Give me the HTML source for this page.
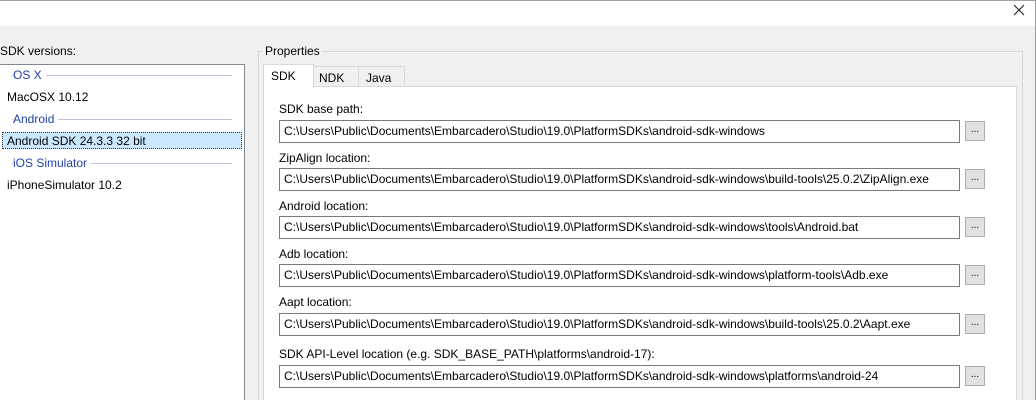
<!DOCTYPE html>
<html><head><style>
*{margin:0;padding:0;box-sizing:border-box}
html,body{width:1036px;height:400px;overflow:hidden}
body{background:#f0f0f0;font-family:"Liberation Sans",sans-serif;font-size:12px;color:#000;position:relative}
.a{position:absolute}
.lbl{position:absolute;left:279px;white-space:nowrap}
.fld{position:absolute;left:279px;width:681px;height:23px;background:#fff;border:1px solid #7a7a7a;padding:3px 0 0 4px;white-space:nowrap}
.btn{position:absolute;left:965px;width:20px;height:20px;background:#e1e1e1;border:1px solid #adadad;font-size:10px;text-align:center;line-height:16px}
.hdr{position:absolute;left:13px;color:#1f3fa8;white-space:nowrap;background:#fff;padding-right:4px}
.hl{position:absolute;left:12px;width:220px;border-top:1px solid #c0c4d8}
</style></head><body>
<div class="a" style="left:0;top:0;width:1036px;height:26px;background:#fff"></div>
<div class="a" style="left:0;top:0;width:1036px;height:400px;border:1px solid #a0a0a0;border-bottom:none;border-left:none"></div>
<svg class="a" style="left:1013px;top:4px" width="12" height="12"><path d="M1 1L11 11M11 1L1 11" stroke="#222" stroke-width="1.1"/></svg>
<div class="a" style="left:0;top:44px">SDK versions:</div>
<div class="a" style="left:0;top:64px;width:245px;height:336px;background:#fff;border:1px solid #828790;border-left:none;border-bottom:none"></div>
<div class="hl" style="top:75px"></div><div class="hdr" style="top:68px">OS X</div>
<div class="a" style="left:7px;top:90px">MacOSX 10.12</div>
<div class="hl" style="top:119px"></div><div class="hdr" style="top:112px">Android</div>
<div class="a" style="left:2px;top:132px;width:240px;height:17px;background:#cce8ff;border:1px dotted #333"></div>
<div class="a" style="left:7px;top:134px">Android SDK 24.3.3 32 bit</div>
<div class="hl" style="top:163px"></div><div class="hdr" style="top:156px">iOS Simulator</div>
<div class="a" style="left:7px;top:178px">iPhoneSimulator 10.2</div>
<div class="a" style="left:258px;top:51px;width:765px;height:349px;border:1px solid #d5d5d5;border-bottom:none"></div>
<div class="a" style="left:263px;top:44px;background:#f0f0f0;padding:0 2px">Properties</div>
<div class="a" style="left:263px;top:86px;width:754px;height:314px;background:#fff;border:1px solid #d9d9d9;border-bottom:none"></div>
<div class="a" style="left:313px;top:66px;width:46px;height:21px;border:1px solid #d9d9d9;background:#f0f0f0;padding:4px 0 0 5px">NDK</div>
<div class="a" style="left:358px;top:66px;width:47px;height:21px;border:1px solid #d9d9d9;background:#f0f0f0;padding:4px 0 0 7px">Java</div>
<div class="a" style="left:263px;top:64px;width:51px;height:24px;border:1px solid #d9d9d9;border-bottom:none;background:#fff;padding:4px 0 0 7px">SDK</div>
<div class="lbl" style="top:102px">SDK base path:</div>
<div class="fld" style="top:120px">C:\Users\Public\Documents\Embarcadero\Studio\19.0\PlatformSDKs\android-sdk-windows</div><div class="btn" style="top:121px">...</div>
<div class="lbl" style="top:151px">ZipAlign location:</div>
<div class="fld" style="top:168px">C:\Users\Public\Documents\Embarcadero\Studio\19.0\PlatformSDKs\android-sdk-windows\build-tools\25.0.2\ZipAlign.exe</div><div class="btn" style="top:169px">...</div>
<div class="lbl" style="top:199px">Android location:</div>
<div class="fld" style="top:216px">C:\Users\Public\Documents\Embarcadero\Studio\19.0\PlatformSDKs\android-sdk-windows\tools\Android.bat</div><div class="btn" style="top:217px">...</div>
<div class="lbl" style="top:247px">Adb location:</div>
<div class="fld" style="top:264px">C:\Users\Public\Documents\Embarcadero\Studio\19.0\PlatformSDKs\android-sdk-windows\platform-tools\Adb.exe</div><div class="btn" style="top:265px">...</div>
<div class="lbl" style="top:295px">Aapt location:</div>
<div class="fld" style="top:313px">C:\Users\Public\Documents\Embarcadero\Studio\19.0\PlatformSDKs\android-sdk-windows\build-tools\25.0.2\Aapt.exe</div><div class="btn" style="top:314px">...</div>
<div class="lbl" style="top:347px">SDK API-Level location (e.g. SDK_BASE_PATH\platforms\android-17):</div>
<div class="fld" style="top:365px">C:\Users\Public\Documents\Embarcadero\Studio\19.0\PlatformSDKs\android-sdk-windows\platforms\android-24</div><div class="btn" style="top:366px">...</div>
</body></html>
